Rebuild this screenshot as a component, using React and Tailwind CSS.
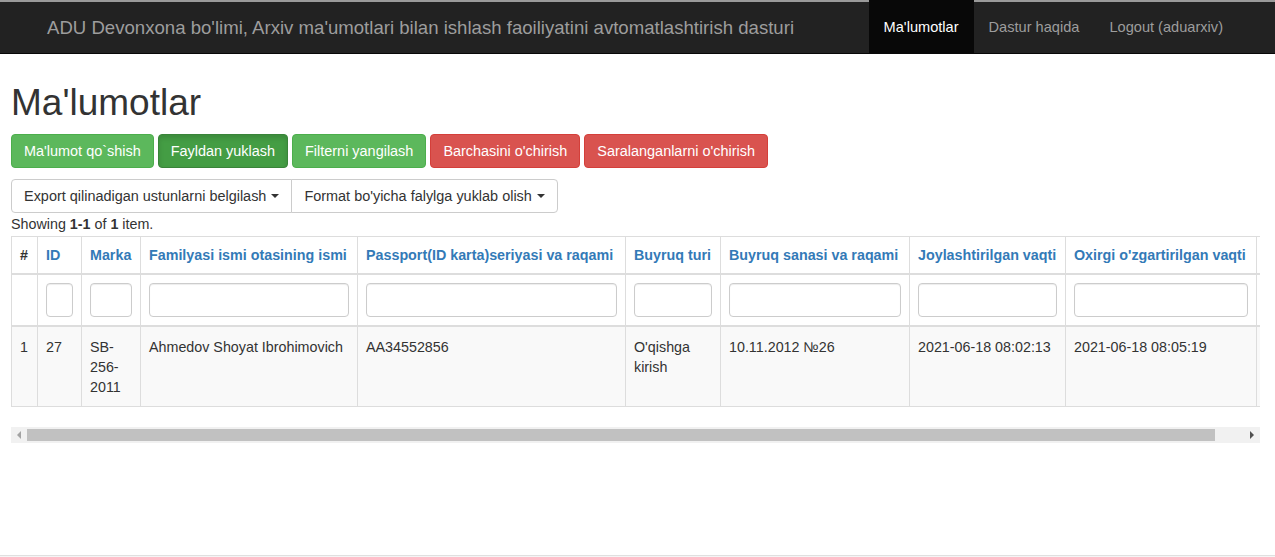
import React from "react";

const cols = [
  { label: "#", w: 26, plain: true },
  { label: "ID", w: 44 },
  { label: "Marka", w: 59 },
  { label: "Familyasi ismi otasining ismi", w: 217 },
  { label: "Passport(ID karta)seriyasi va raqami", w: 268 },
  { label: "Buyruq turi", w: 95 },
  { label: "Buyruq sanasi va raqami", w: 189 },
  { label: "Joylashtirilgan vaqti", w: 156 },
  { label: "Oxirgi o'zgartirilgan vaqti", w: 191 },
  { label: "", w: 80, extra: true },
];

const row = [
  "1",
  "27",
  "SB-256-2011",
  "Ahmedov Shoyat Ibrohimovich",
  "AA34552856",
  "O'qishga kirish",
  "10.11.2012 №26",
  "2021-06-18 08:02:13",
  "2021-06-18 08:05:19",
  "",
];

function Caret() {
  return (
    <span className="inline-block ml-[5px] align-middle w-0 h-0 border-t-[4px] border-t-[#333] border-x-[4px] border-x-transparent" />
  );
}

export default function App() {
  const font = { fontFamily: '"Liberation Sans", Arial, Helvetica, sans-serif' };
  return (
    <div
      className="h-[557px] w-[1275px] overflow-hidden flex flex-col bg-white text-[#333] text-[14.3px] leading-[20px]"
      style={font}
    >
      {/* Navbar */}
      <div className="shrink-0 h-[54px] bg-[#222] border-t-2 border-t-[#9a9a9a] border-b border-b-[#080808] flex items-stretch">
        <div className="flex-1 flex items-center pl-[47px] text-[18.6px] text-[#9d9d9d]">
          ADU Devonxona bo'limi, Arxiv ma'umotlari bilan ishlash faoiliyatini avtomatlashtirish dasturi
        </div>
        <div className="flex items-stretch mr-[37px] -mt-[2px] text-[14.6px]">
          <div className="flex items-center px-[15px] bg-[#080808] text-white">Ma'lumotlar</div>
          <div className="flex items-center px-[15px] text-[#9d9d9d]">Dastur haqida</div>
          <div className="flex items-center px-[15px] text-[#9d9d9d]">Logout (aduarxiv)</div>
        </div>
      </div>

      {/* Content */}
      <div className="flex-1 px-[11px]">
        <h1 className="mt-[29px] text-[37px] leading-[40px] font-medium text-[#333]">Ma'lumotlar</h1>

        <div className="mt-[11px] flex gap-[4px] text-[14.45px]">
          <button className="h-[34px] px-[12px] rounded-[4px] border border-[#4cae4c] bg-[#5cb85c] text-white">
            Ma'lumot qo`shish
          </button>
          <button className="h-[34px] px-[12px] rounded-[4px] border border-[#398439] bg-[#449d44] text-white shadow-[inset_0_3px_5px_rgba(0,0,0,0.125)]">
            Fayldan yuklash
          </button>
          <button className="h-[34px] px-[12px] rounded-[4px] border border-[#4cae4c] bg-[#5cb85c] text-white">
            Filterni yangilash
          </button>
          <button className="h-[34px] px-[12px] rounded-[4px] border border-[#d43f3a] bg-[#d9534f] text-white">
            Barchasini o'chirish
          </button>
          <button className="h-[34px] px-[12px] rounded-[4px] border border-[#d43f3a] bg-[#d9534f] text-white">
            Saralanganlarni o'chirish
          </button>
        </div>

        <div className="mt-[11px] flex text-[14.45px]">
          <button className="h-[34px] px-[12px] rounded-l-[4px] border border-[#ccc] bg-white text-[#333] flex items-center">
            Export qilinadigan ustunlarni belgilash
            <Caret />
          </button>
          <button className="h-[34px] px-[12px] -ml-px rounded-r-[4px] border border-[#ccc] bg-white text-[#333] flex items-center">
            Format bo'yicha falylga yuklab olish
            <Caret />
          </button>
        </div>

        <div className="mt-px">
          Showing <b>1-1</b> of <b>1</b> item.
        </div>

        {/* Table */}
        <div className="mt-[2px] w-[1249px] overflow-hidden">
          <table
            className="border-collapse border border-[#ddd] table-fixed mb-[20px]"
            style={{ width: cols.reduce((a, c) => a + c.w, 0) }}
          >
            <colgroup>
              {cols.map((c, i) => (
                <col key={i} style={{ width: c.w }} />
              ))}
            </colgroup>
            <thead>
              <tr>
                {cols.map((c, i) => (
                  <th
                    key={i}
                    className={
                      "border border-[#ddd] border-b-2 px-[8px] py-[8px] h-[37px] text-left font-bold whitespace-nowrap overflow-hidden " +
                      (c.plain ? "text-[#333]" : "text-[#337ab7]")
                    }
                  >
                    {c.label}
                  </th>
                ))}
              </tr>
              <tr>
                {cols.map((c, i) => (
                  <td key={i} className="border border-[#ddd] border-b-2 px-[8px] py-[8px]">
                    {i === 0 || c.extra ? (
                      <div className="h-[34px]" />
                    ) : (
                      <input
                        className="block w-full h-[34px] rounded-[4px] border border-[#ccc] bg-white shadow-[inset_0_1px_1px_rgba(0,0,0,0.075)]"
                        type="text"
                      />
                    )}
                  </td>
                ))}
              </tr>
            </thead>
            <tbody>
              <tr className="bg-[#f9f9f9]">
                {row.map((v, i) => (
                  <td
                    key={i}
                    className="border border-[#ddd] px-[8px] pt-[10px] pb-[9px] align-top h-[80px]"
                  >
                    {i === 2 ? (
                      <>
                        SB-
                        <br />
                        256-
                        <br />
                        2011
                      </>
                    ) : i === 5 ? (
                      <>
                        O'qishga
                        <br />
                        kirish
                      </>
                    ) : (
                      <span className="whitespace-nowrap">{v}</span>
                    )}
                  </td>
                ))}
              </tr>
            </tbody>
          </table>

          {/* Scrollbar */}
          <div className="h-[16px] bg-[#f1f1f1] flex items-center">
            <div className="w-[16px] flex items-center justify-center">
              <span className="w-0 h-0 border-y-[4px] border-y-transparent border-r-[4px] border-r-[#a3a3a3]" />
            </div>
            <div className="h-[12px] w-[1188px] bg-[#c1c1c1]" />
            <div className="flex-1" />
            <div className="w-[16px] flex items-center justify-center">
              <span className="w-0 h-0 border-y-[4px] border-y-transparent border-l-[4px] border-l-[#505050]" />
            </div>
          </div>
        </div>
      </div>

      <div className="shrink-0 h-[2px] border-t border-[#e0e0e0] bg-[#f5f5f5]" />
    </div>
  );
}
